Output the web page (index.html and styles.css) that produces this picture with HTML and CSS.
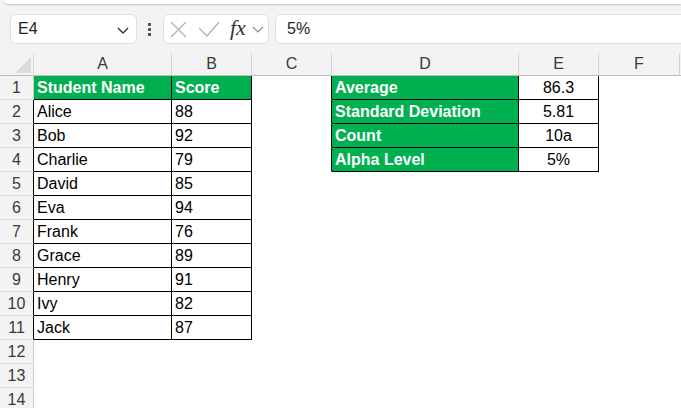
FILE: index.html
```html
<!DOCTYPE html>
<html lang="en">
<head>
    <meta charset="UTF-8">
    <meta name="viewport" content="width=device-width, initial-scale=1.0">
    <title>Student Scores</title>
    <link rel="stylesheet" href="styles.css">
</head>
<body>
    <div class="top-area">
        <div class="ribbon-edge"></div>
        <div class="formula-bar">
            <div class="name-box">
                <span class="name-text">E4</span>
                <svg class="name-chevron" width="12" height="7" viewBox="0 0 12 7">
                    <path d="M1 1 L6 6 L11 1" fill="none" stroke="#333" stroke-width="1.4"/>
                </svg>
            </div>
            <div class="bar-dots">
                <span></span><span></span><span></span>
            </div>
            <div class="fx-box">
                <svg width="17" height="17" viewBox="0 0 17 17">
                    <path d="M1 1 L16 16 M16 1 L1 16" stroke="#b4b4b4" stroke-width="1.4"/>
                </svg>
                <svg class="fx-check" width="22" height="17" viewBox="0 0 22 17">
                    <path d="M1 7 L9 15 L21 1" fill="none" stroke="#b4b4b4" stroke-width="1.4"/>
                </svg>
                <span class="fx-text">fx</span>
                <svg width="12" height="7" viewBox="0 0 12 7">
                    <path d="M1 1 L6 6 L11 1" fill="none" stroke="#8a8a8a" stroke-width="1.2"/>
                </svg>
            </div>
            <div class="formula-input">5%</div>
        </div>
        <div class="col-head">
            <div class="corner"><div class="corner-tri"></div></div>
            <div class="ch col-a">A</div>
            <div class="ch col-b">B</div>
            <div class="ch col-c">C</div>
            <div class="ch col-d">D</div>
            <div class="ch col-e">E</div>
            <div class="ch col-f">F</div>
            <div class="ch col-g"></div>
        </div>
    </div>

    <div class="sheet">
        <div class="row">
            <div class="rh">1</div>
            <div class="cell col-a boxed head">Student Name</div>
            <div class="cell col-b boxed head">Score</div>
            <div class="cell col-c edge"></div>
            <div class="cell col-d boxed head">Average</div>
            <div class="cell col-e boxed val">86.3</div>
            <div class="cell col-f"></div>
            <div class="cell col-g"></div>
        </div>
        <div class="row">
            <div class="rh dark">2</div>
            <div class="cell col-a boxed">Alice</div>
            <div class="cell col-b boxed">88</div>
            <div class="cell col-c edge"></div>
            <div class="cell col-d boxed head">Standard Deviation</div>
            <div class="cell col-e boxed val">5.81</div>
            <div class="cell col-f"></div>
            <div class="cell col-g"></div>
        </div>
        <div class="row">
            <div class="rh dark">3</div>
            <div class="cell col-a boxed">Bob</div>
            <div class="cell col-b boxed">92</div>
            <div class="cell col-c edge"></div>
            <div class="cell col-d boxed head">Count</div>
            <div class="cell col-e boxed val">10a</div>
            <div class="cell col-f"></div>
            <div class="cell col-g"></div>
        </div>
        <div class="row">
            <div class="rh dark">4</div>
            <div class="cell col-a boxed">Charlie</div>
            <div class="cell col-b boxed">79</div>
            <div class="cell col-c edge"></div>
            <div class="cell col-d boxed head">Alpha Level</div>
            <div class="cell col-e boxed val">5%</div>
            <div class="cell col-f"></div>
            <div class="cell col-g"></div>
        </div>
        <div class="row">
            <div class="rh dark">5</div>
            <div class="cell col-a boxed">David</div>
            <div class="cell col-b boxed">85</div>
        </div>
        <div class="row">
            <div class="rh dark">6</div>
            <div class="cell col-a boxed">Eva</div>
            <div class="cell col-b boxed">94</div>
        </div>
        <div class="row">
            <div class="rh dark">7</div>
            <div class="cell col-a boxed">Frank</div>
            <div class="cell col-b boxed">76</div>
        </div>
        <div class="row">
            <div class="rh dark">8</div>
            <div class="cell col-a boxed">Grace</div>
            <div class="cell col-b boxed">89</div>
        </div>
        <div class="row">
            <div class="rh dark">9</div>
            <div class="cell col-a boxed">Henry</div>
            <div class="cell col-b boxed">91</div>
        </div>
        <div class="row">
            <div class="rh dark">10</div>
            <div class="cell col-a boxed">Ivy</div>
            <div class="cell col-b boxed">82</div>
        </div>
        <div class="row">
            <div class="rh dark">11</div>
            <div class="cell col-a boxed">Jack</div>
            <div class="cell col-b boxed">87</div>
        </div>
        <div class="row">
            <div class="rh">12</div>
        </div>
        <div class="row">
            <div class="rh">13</div>
        </div>
        <div class="row">
            <div class="rh">14</div>
        </div>
    </div>
</body>
</html>
```

FILE: styles.css
```css
body, html {
    margin: 0;
    padding: 0;
    font-family: "Liberation Sans", Arial, sans-serif;
    background: #fff;
    overflow: hidden;
}
.top-area {
    background: #f3f3f3;
    overflow: hidden;
}
.ribbon-edge {
    height: 4px;
    margin-left: 4px;
    background: #fff;
    border-bottom-left-radius: 8px;
    box-shadow: 0 1px 2px rgba(0, 0, 0, 0.2);
}
.formula-bar {
    display: flex;
    align-items: center;
    height: 30px;
    padding: 10px 0 0 10px;
}
.name-box {
    box-sizing: border-box;
    width: 127px;
    height: 30px;
    background: #fff;
    border: 1px solid #e0e0e0;
    border-radius: 6px;
    display: flex;
    align-items: center;
    justify-content: space-between;
    padding: 0 7px 0 7px;
}
.name-text {
    font-size: 16px;
    color: #222;
}
.name-chevron {
    margin-top: 2px;
}
.bar-dots {
    display: flex;
    flex-direction: column;
    gap: 2px;
    margin: 0 12px 0 11px;
}
.bar-dots span {
    width: 3px;
    height: 3px;
    background: #555;
}
.fx-box {
    box-sizing: border-box;
    width: 106px;
    height: 30px;
    background: #fff;
    border: 1px solid #e0e0e0;
    border-radius: 6px;
    display: flex;
    align-items: center;
    padding-left: 6px;
}
.fx-check {
    margin-left: 11px;
}
.fx-text {
    font-family: "Liberation Serif", "Times New Roman", serif;
    font-style: italic;
    font-size: 22px;
    color: #333;
    margin: -3px 6px 0 10px;
}
.formula-input {
    box-sizing: border-box;
    flex: 1;
    height: 30px;
    margin-left: 6px;
    margin-right: -10px;
    background: #fff;
    border: 1px solid #e0e0e0;
    border-radius: 6px;
    font-size: 16px;
    color: #222;
    line-height: 28px;
    padding-left: 11px;
}
.col-head {
    display: flex;
    padding-top: 9px;
}
.corner {
    box-sizing: border-box;
    flex-shrink: 0;
    width: 34px;
    height: 23px;
    border-right: 1px solid #d8d8d8;
    border-bottom: 1px solid #bdbdbd;
    display: flex;
    justify-content: flex-end;
    align-items: flex-end;
    padding: 0 2px 2px 0;
}
.corner-tri {
    width: 0;
    height: 0;
    border-left: 16px solid transparent;
    border-bottom: 16px solid #dcdcdc;
}
.ch {
    box-sizing: border-box;
    flex-shrink: 0;
    height: 23px;
    border-right: 1px solid #d4d4d4;
    border-bottom: 1px solid #bdbdbd;
    text-align: center;
    font-size: 16px;
    line-height: 22px;
    color: #3a3a3a;
}
.col-a { width: 138px; }
.col-b { width: 80px; }
.col-c { width: 80px; }
.col-d { width: 187px; }
.col-e { width: 80px; }
.col-f { width: 81px; }
.col-g { width: 80px; }

.sheet {
    overflow: hidden;
}
.row {
    display: flex;
    height: 24px;
    overflow: hidden;
}
.rh {
    box-sizing: border-box;
    flex-shrink: 0;
    width: 34px;
    height: 24px;
    background: #f3f3f3;
    border-right: 1px solid #cfcfcf;
    border-bottom: 1px solid #dcdcdc;
    text-align: center;
    font-size: 16px;
    line-height: 22px;
    padding-top: 1px;
    color: #3a3a3a;
}
.rh.dark {
    border-right-color: #000;
}
.cell {
    box-sizing: border-box;
    flex-shrink: 0;
    height: 24px;
    border-right: 1px solid #fff;
    border-bottom: 1px solid #fff;
    font-size: 16px;
    line-height: 22px;
    padding: 1px 0 0 3px;
    color: #000;
    white-space: nowrap;
    overflow: hidden;
}
.cell.boxed {
    border-right-color: #000;
    border-bottom-color: #000;
}
.cell.edge {
    border-right-color: #000;
}
.cell.head {
    background: #00b050;
    color: #fff;
    font-weight: bold;
}
.cell.val {
    text-align: center;
    padding-left: 0;
}
```
